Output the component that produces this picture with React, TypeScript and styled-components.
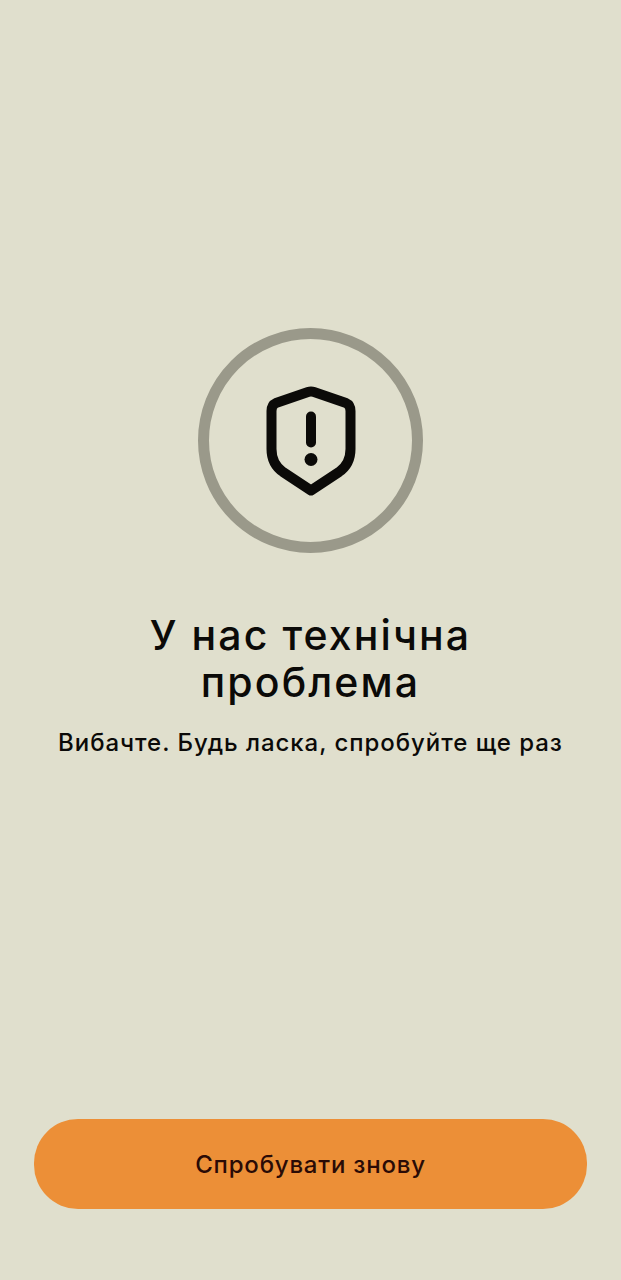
import styled, { createGlobalStyle } from "styled-components";

const GlobalStyle = createGlobalStyle`
  html, body {
    margin: 0;
    padding: 0;
    background: #e0dfcd;
  }
`;

const Screen = styled.div`
  display: flex;
  flex-direction: column;
  align-items: center;
  box-sizing: border-box;
  height: 1280px;
  padding: 328px 34px 71px;
  background: #e0dfcd;
  color: #0b0a08;
  font-family: "Inter", "Noto Sans", sans-serif;
`;

const IconRing = styled.div`
  display: flex;
  align-items: center;
  justify-content: center;
  box-sizing: border-box;
  width: 225px;
  height: 225px;
  border: 11px solid #9a998a;
  border-radius: 50%;
`;

const Title = styled.h1`
  margin: 59px 0 0;
  font-size: 41px;
  font-weight: 500;
  line-height: 47px;
  letter-spacing: 2.1px;
  text-align: center;
`;

const Message = styled.p`
  margin: 21px 0 0;
  font-size: 24px;
  font-weight: 500;
  line-height: 32px;
  letter-spacing: 0.95px;
  text-align: center;
  white-space: nowrap;
`;

const RetryButton = styled.button`
  width: 100%;
  height: 90px;
  margin-top: auto;
  border: 0;
  border-radius: 44px;
  background: #ec8f37;
  color: #2a0b06;
  font-family: inherit;
  font-size: 24px;
  font-weight: 500;
  letter-spacing: 0.8px;
  cursor: pointer;
`;

const ShieldIcon = () => (
  <svg width="100" height="120" viewBox="0 0 100 120" fill="none" stroke="#0b0a08" strokeLinecap="round" strokeLinejoin="round">
    <path
      strokeWidth="10"
      d="M47 11 Q50 10 53 11 L85 22 Q89.5 24 89.5 30 V68 Q89.5 83 78 91 L50 109.5 L22 91 Q10.5 83 10.5 68 V30 Q10.5 24 15 22 Z"
    />
    <path strokeWidth="10" d="M50 35.5 V61.5" />
    <circle cx="50" cy="78.5" r="6.5" fill="#0b0a08" stroke="none" />
  </svg>
);

const App = () => {
  return (
    <>
      <GlobalStyle />
      <Screen>
        <IconRing>
          <ShieldIcon />
        </IconRing>
        <Title>
          У нас технічна
          <br />
          проблема
        </Title>
        <Message>Вибачте. Будь ласка, спробуйте ще раз</Message>
        <RetryButton>Спробувати знову</RetryButton>
      </Screen>
    </>
  );
};

export default App;
